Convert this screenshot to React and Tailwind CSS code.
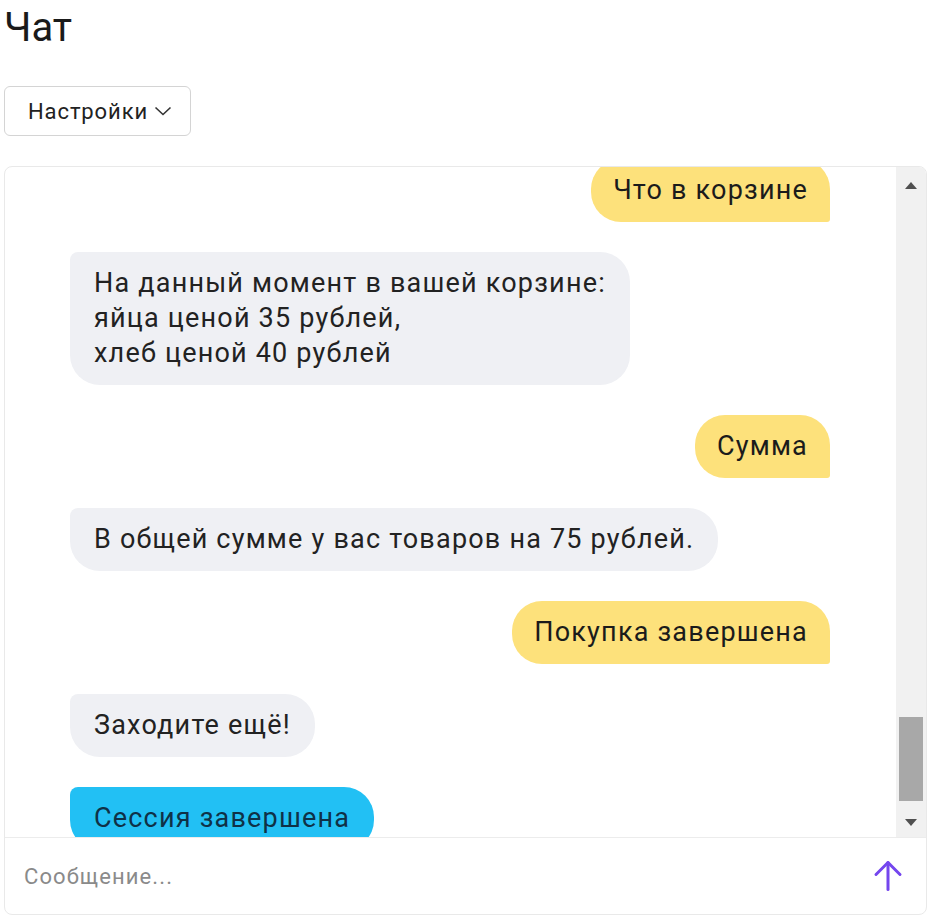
import React from 'react';

const messages = [
    { from: 'user', text: 'Что в корзине' },
    { from: 'bot', text: 'На данный момент в вашей корзине:\nяйца ценой 35 рублей,\nхлеб ценой 40 рублей' },
    { from: 'user', text: 'Сумма' },
    { from: 'bot', text: 'В общей сумме у вас товаров на 75 рублей.' },
    { from: 'user', text: 'Покупка завершена' },
    { from: 'bot', text: 'Заходите ещё!' },
    { from: 'end', text: 'Сессия завершена' },
];

const Bubble = ({ from, text }) => {
    if (from === 'user') {
        return (
            <div className="flex justify-end">
                <div className="bg-[#fde17b] text-[#1b1b1b] rounded-[30px] rounded-br-[3px] px-[22px] py-[14px] whitespace-pre-line">
                    {text}
                </div>
            </div>
        );
    }
    const color = from === 'end' ? 'bg-[#22c0f4] text-[#0f3147]' : 'bg-[#eff0f4] text-[#222]';
    return (
        <div className="flex justify-start">
            <div className={`${color} rounded-[30px] rounded-tl-[8px] px-[24px] py-[14px] whitespace-pre-line`}>
                {text}
            </div>
        </div>
    );
};

const App = () => {
    return (
        <div className="w-[929px] h-[919px] bg-white font-['Roboto',sans-serif] text-[#1a1a1a]">
            <h1 className="pl-1 pt-[4px] text-[40px] leading-[48px] font-normal">Чат</h1>

            <div className="pl-1 mt-[34px]">
                <button className="h-[50px] w-[187px] border border-[#d4d4d4] rounded-[6px] flex items-center pl-[23px] gap-[6px] text-[22px] tracking-[0.9px] text-[#222]">
                    Настройки
                    <svg width="18" height="12" viewBox="0 0 18 12" fill="none" stroke="#333" strokeWidth="1.6">
                        <path d="M1.5 2.5 L9 9.5 L16.5 2.5" />
                    </svg>
                </button>
            </div>

            <div className="ml-1 mt-[30px] w-[923px] h-[749px] border border-[#e9e9e9] rounded-[8px] flex flex-col overflow-hidden">
                <div className="flex h-[670px]">
                    <div className="flex-1 overflow-hidden pl-[65px] pr-[66px]">
                        <div className="-mt-[8px] flex flex-col gap-[30px] text-[27px] leading-[35px] tracking-[1.2px]">
                            {messages.map((m, i) => (
                                <Bubble key={i} from={m.from} text={m.text} />
                            ))}
                        </div>
                    </div>
                    <div className="w-[30px] bg-[#f1f1f1] flex flex-col items-center">
                        <svg className="mt-[15px]" width="12" height="7" viewBox="0 0 12 7">
                            <path d="M0 7 L6 0 L12 7 Z" fill="#505050" />
                        </svg>
                        <div className="mt-[528px] w-[24px] h-[84px] bg-[#a8a8a8]" />
                        <svg className="mt-[18px]" width="12" height="7" viewBox="0 0 12 7">
                            <path d="M0 0 L6 7 L12 0 Z" fill="#505050" />
                        </svg>
                    </div>
                </div>
                <div className="flex-1 border-t border-[#ececec] flex items-center justify-between pl-[19px] pr-[20px]">
                    <span className="text-[22px] text-[#8a8a8a] tracking-[1.1px]">Сообщение...</span>
                    <svg width="36" height="36" viewBox="0 0 24 24" fill="none" stroke="#7446ee" strokeWidth="2" strokeLinecap="round" strokeLinejoin="round">
                        <path d="M12 21 V3" />
                        <path d="M4 11 L12 3 L20 11" />
                    </svg>
                </div>
            </div>
        </div>
    );
};

export default App;
